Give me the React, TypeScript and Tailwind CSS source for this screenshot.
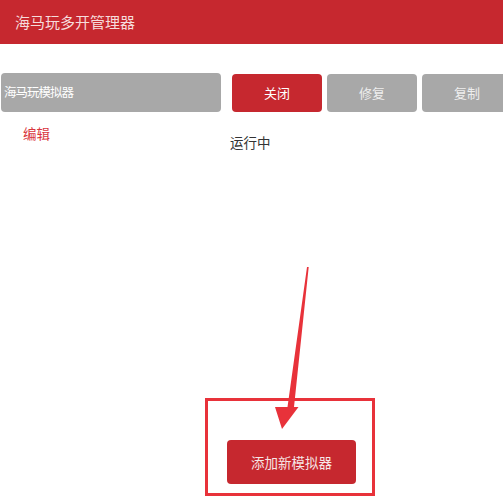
const FONT = { fontFamily: '"Microsoft YaHei", "Noto Sans CJK SC", sans-serif' };

const ACTIONS = [
  { label: "关闭", active: true },
  { label: "修复", active: false },
  { label: "复制", active: false },
];

export default function App() {
  return (
    <div className="relative h-[499px] w-full overflow-hidden bg-white" style={FONT}>
      <header className="flex h-[44px] items-center bg-[#c6282f] px-[15px]">
        <h1 className="text-[15px] font-normal text-[#f6dcdc]">海马玩多开管理器</h1>
      </header>

      <div className="mt-[29px] flex items-end">
        <div className="ml-[1px] flex h-[39px] w-[220px] shrink-0 items-center rounded-[4px] bg-[#a8a8a8] pl-[3px] text-[12.5px] tracking-[-1px] text-white">
          海马玩模拟器
        </div>
        <div className="ml-[11px] flex shrink-0 gap-[5px]">
          {ACTIONS.map((a) => (
            <button
              key={a.label}
              type="button"
              className={`h-[38px] w-[90px] shrink-0 rounded-[4px] text-[13px] ${
                a.active ? "bg-[#c6282f] text-white" : "bg-[#a8a8a8] text-[#eeeeee]"
              }`}
            >
              {a.label}
            </button>
          ))}
        </div>
      </div>

      <div className="flex h-[39px]">
        <div className="w-[221px] shrink-0 pl-[23px] pt-[12px] text-[13.5px] leading-[18px] text-[#d9363e]">编辑</div>
        <div className="pl-[9px] pt-[21px] text-[13.5px] leading-[18px] text-[#333333]">运行中</div>
      </div>

      <div className="ml-[205px] mt-[247px] h-[98px] w-[170px] border-[3px] border-[#e8323a] pl-[19px] pt-[39px]">
        <button
          type="button"
          className="h-[44px] w-[129px] rounded-[4px] bg-[#c6282f] text-[13.5px] text-[#f6e6e6]"
        >
          添加新模拟器
        </button>
      </div>

      {/* annotation arrow */}
      <svg className="pointer-events-none absolute left-0 top-0" width="503" height="499" viewBox="0 0 503 499">
        <polygon
          points="307,267 308.7,267 294,407 298.5,407 282,429 275,407 287.5,407"
          fill="#e8323a"
        />
      </svg>
    </div>
  );
}
